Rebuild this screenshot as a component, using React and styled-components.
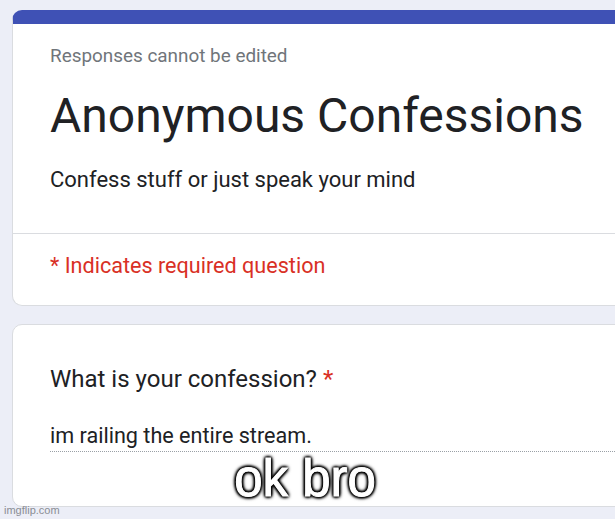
import React from "react";
import styled, { createGlobalStyle } from "styled-components";

const GlobalStyle = createGlobalStyle`
  html, body {
    margin: 0;
    padding: 0;
    background: #eceef7;
  }
  body {
    font-family: Roboto, "Noto Sans", Arial, sans-serif;
  }
`;

const Page = styled.div`
  position: relative;
  width: 615px;
  height: 519px;
  overflow: hidden;
  background: #eceef7;
  padding: 10px 0 0 12px;
  box-sizing: border-box;
  display: flex;
  flex-direction: column;
  gap: 18px;
`;

const Card = styled.div`
  width: 660px;
  flex: none;
  background: #fff;
  border: 1px solid #dadce0;
  border-top: ${(p) => (p.$accent ? "14px solid #3f51b5" : "1px solid #dadce0")};
  border-radius: 10px;
  box-sizing: border-box;
  height: ${(p) => p.$height}px;
`;

const Header = styled.div`
  padding: 20px 0 0 37px;
  height: 210px;
  box-sizing: border-box;
  border-bottom: 1px solid #dadce0;
`;

const Note = styled.div`
  color: #70757a;
  font-size: 18.9px;
  line-height: 24px;
`;

const Title = styled.h1`
  margin: 20px 0 0;
  font-weight: 400;
  font-size: 48px;
  line-height: 56px;
  color: #202124;
`;

const Desc = styled.div`
  margin-top: 22px;
  font-size: 22px;
  line-height: 28px;
  color: #202124;
`;

const Required = styled.div`
  padding: 18px 0 0 37px;
  font-size: 21.6px;
  line-height: 28px;
  color: #d93025;
`;

const Question = styled.div`
  padding: 39px 0 0 37px;
`;

const QuestionText = styled.div`
  font-size: 24px;
  line-height: 30px;
  color: #202124;

  span {
    color: #d93025;
  }
`;

const Answer = styled.div`
  margin-top: 27px;
  font-size: 21.6px;
  line-height: 30px;
  color: #202124;
  border-bottom: 1px dotted #9aa0a6;
`;

const Caption = styled.div`
  position: absolute;
  left: 0;
  right: 5px;
  top: 451px;
  text-align: center;
  font-family: "Liberation Sans", Arial, sans-serif;
  font-size: 51px;
  line-height: 56px;
  color: #fff;
  -webkit-text-stroke: 1px #fff;
  text-shadow: 0 0 2px #000, 0 0 3px #000, 0 0 4px #000, 0 0 5px #000,
    1px 1px 3px #000, -1px -1px 3px #000, 1px -1px 3px #000,
    -1px 1px 3px #000;
`;

const Watermark = styled.div`
  position: absolute;
  left: 4px;
  bottom: 3px;
  font-family: "Liberation Sans", Arial, sans-serif;
  font-size: 11px;
  color: #8a8d94;
`;

export default function App() {
  return (
    <>
      <GlobalStyle />
      <Page>
        <Card $accent $height={296}>
          <Header>
            <Note>Responses cannot be edited</Note>
            <Title>Anonymous Confessions</Title>
            <Desc>Confess stuff or just speak your mind</Desc>
          </Header>
          <Required>* Indicates required question</Required>
        </Card>
        <Card $height={183}>
          <Question>
            <QuestionText>
              What is your confession? <span>*</span>
            </QuestionText>
            <Answer>im railing the entire stream.</Answer>
          </Question>
        </Card>
        <Caption>ok bro</Caption>
        <Watermark>imgflip.com</Watermark>
      </Page>
    </>
  );
}
